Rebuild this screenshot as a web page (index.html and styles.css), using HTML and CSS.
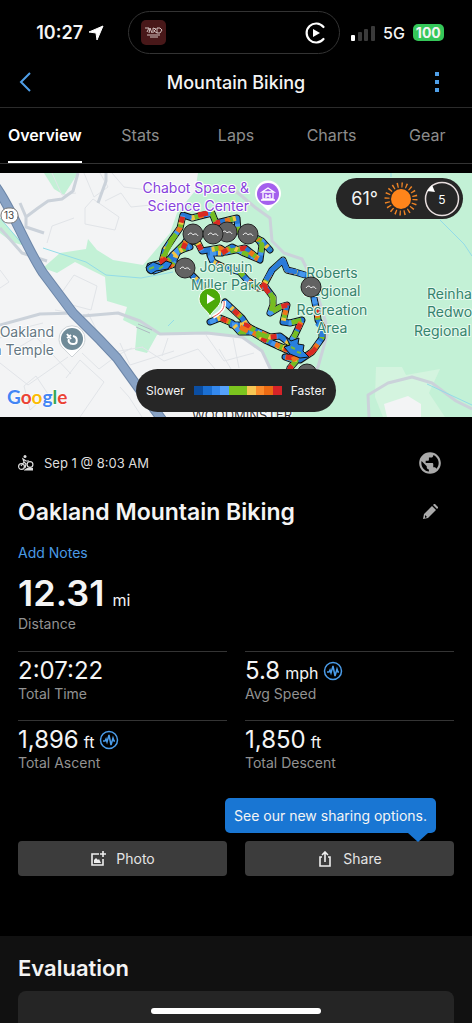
FILE: index.html
```html
<!DOCTYPE html>
<html lang="en">

<head>
    <meta charset="UTF-8">
    <meta name="viewport" content="width=device-width, initial-scale=1">
    <title>Mountain Biking</title>
    <link rel="stylesheet" href="styles.css">
</head>

<body>
    <div class="status">
        <div class="clock">
            <span>10:27</span>
            <svg width="16" height="16" viewBox="0 0 16 16"><path d="M15 1 9 15 8 8 1 7z" fill="#fff" stroke="#fff" stroke-linejoin="round"/></svg>
        </div>
        <div class="island">
            <svg width="25" height="25" viewBox="0 0 25 25">
                <rect width="25" height="25" rx="5" fill="#481819"/>
                <path d="M4 8l4 0-2 4M8 13l1-5 2 5M12 13V8l3 1-2 2 3 2M16 8h3l2 2-2 3h-3zM6 15h13M9 17h8" fill="none" stroke="#d3c2c0" stroke-width="1"/>
            </svg>
            <svg width="22" height="22" viewBox="0 0 22 22">
                <path d="M18.500 5A9.500 9.500 0 1 0 18.500 17" fill="none" stroke="#fff" stroke-width="2.200" stroke-linecap="round"/>
                <path d="M8 7v8l7-4z" fill="#fff"/>
            </svg>
        </div>
        <div class="signal">
            <svg width="24" height="16" viewBox="0 0 24 16">
                <rect x="0" y="10" width="4" height="6" rx="1" fill="#fff"/>
                <rect x="7" y="7" width="4" height="9" rx="1" fill="#3a3a3a"/>
                <rect x="13" y="4" width="4" height="12" rx="1" fill="#3a3a3a"/>
                <rect x="20" y="1" width="4" height="15" rx="1" fill="#3a3a3a"/>
            </svg>
            <span>5G</span>
            <span class="battery">100</span>
        </div>
    </div>

    <header class="header">
        <button class="icon-btn back" aria-label="Back">
            <svg width="12" height="20" viewBox="0 0 12 20"><path d="M11 1 2 10l9 9" fill="none" stroke="#4f9fe8" stroke-width="2"/></svg>
        </button>
        <h1>Mountain Biking</h1>
        <button class="icon-btn" aria-label="More">
            <svg width="6" height="20" viewBox="0 0 6 20"><path d="M1 0h4v4H1zM1 8h4v4H1zM1 16h4v4H1z" fill="#4f9fe8"/></svg>
        </button>
    </header>

    <nav class="tabs">
        <a class="active" href="#overview">Overview</a>
        <a href="#stats">Stats</a>
        <a href="#laps">Laps</a>
        <a href="#charts">Charts</a>
        <a href="#gear">Gear</a>
    </nav>

    <div class="map">
        <svg class="map-canvas" viewBox="0 0 472 244" preserveAspectRatio="xMidYMid slice">
            <defs>
                <g id="track">
                    <path d="M150 97 162 89 165 77 173 65 180 55 183 42 192 45 212 40 216 50 237 45 238 58 248 62 262 68 270 77"/>
                    <path d="M150 93 167 89 173 82 185 70 193 68 198 70 202 78 220 75 226 79 245 75 260 87 262 72 258 66"/>
                    <path d="M154 98 172 92 178 78 190 74"/>
                    <path d="M173 82 183 76 186 68"/>
                    <path d="M210 82 213 89 223 94 240 99 247 107 258 115 264 114"/>
                    <path d="M210 80 222 80 232 74 244 80 258 86"/>
                    <path d="M173 90 185 95 197 107 205 116"/>
                    <path d="M305 102 295 99 287 97 283 87 272 97 264 112 273 124 273 132 270 140 280 134 287 132 283 149 290 150 302 147 295 162 290 170"/>
                    <path d="M314 125 317 139 318 147 322 154 322 165 312 179 300 187 285 184 296 188 290 195 288 202"/>
                    <path d="M210 149 220 145 232 150 240 159 252 159 265 167 280 174 293 180"/>
                    <path d="M225 129 242 145 248 154 270 164 280 163 288 169 296 174 303 184"/>
                    <path d="M232 152 246 152 262 163 272 170 292 178"/>
                </g>
            </defs>
            <rect width="472" height="244" fill="#f3f4f5"/>
            <path class="park" d="M198 0 195 18 177 40 170 60 143 92 113 87 97 77 88 66 86 76 60 80 43 95 57 100 75 89 105 104 107 128 127 134 123 147 137 154 135 177 147 180 157 162 207 160 245 166 262 179 270 198 275 244H472V0z"/>
            <path class="park" d="M44 0h34L64 22 54 16zM0 45l25 28-13-4L0 60z"/>
            <path d="M376 194l26 0 4 8 34-6-11 24 16 24h-62l-8-20z" fill="#d4f4df"/>
            <path d="M384 231l24-8 13 8v13h-34zM160 163l48-3 37 6 20 18 7 30v30H142l5-62z" fill="#f3f4f5"/>

            <g class="street">
                <path d="M84 0l10 24 14-10-8-14M52 0l10 22 14-2M112 0l12 14 48 6M105 28l16-8 10 14 20-2M85 35l8-9 26 18-4 13-30-6zM47 70l5-17 22-8M60 122l14-20 23 11-6 24-19-5M0 115l9-6-9-12M55 137l30 5M88 140l20 40 35-6M120 170l10 22 44-14M112 185l20-10M16 176l20-12 35 37M0 190l28 22 40-28M24 213l12-10 12 18-18 16zM66 205l14-18 24 22-24 35M120 214l9 10 13 20M142 174l22 14 34-12 17 20M168 165l-6 18M206 162l18 26 30-8M219 176l12 20M233 165l6 30M82 180l17 16 16-12M0 165l15-8 28-7"/>
            </g>
            <path class="road" d="M78 0 73 18 62 26 48 28 38 35 26 44 20 30M26 44l0 10 18 6M0 55l22 25 25 8M83 143l35-3 22 8 20 13 47-1 35 4 20 14 14 30 6 36M0 152l40-11 35-1"/>
            <path class="road" d="M232 15l24 20 14 10 2 23 12 12 18 6 10 20 10 30 6 22-10 36-16 15M369 244l-1-22 20-12 24-6 20 6 24 18 16 8M106 0v8l-8 22"/>
            <path class="water" d="M43 75l43 14 20 13 35 3 32-6M0 45l24 28M391 0v4M440 47l24 24 8 12M168 153l6-6M427 211l45 21"/>
            <path class="highway-edge" d="M-4 14C12 36 26 74 43 100L73 140 100 167 117 185 140 217 163 248"/>
            <path class="highway" d="M-4 14C12 36 26 74 43 100L73 140 100 167 117 185 140 217 163 248"/>
            <path d="M136 154l14 6M138 151l14 6" stroke="#aebac2" fill="none"/>

            <g class="badge">
                <rect x="1" y="35" width="17" height="15" rx="7"/>
                <text x="9" y="46" text-anchor="middle">13</text>
            </g>

            <text class="label area" x="242" y="247" text-anchor="middle">WOODMINSTER</text>

            <use class="track track-edge" href="#track"/>
            <use class="track track-blue" href="#track"/>
            <use class="track track-sky" href="#track"/>
            <use class="track track-green" href="#track"/>
            <use class="track track-yellow" href="#track"/>
            <use class="track track-orange" href="#track"/>
            <use class="track track-red" href="#track"/>

            <!-- long stretches at one speed -->
            <g class="track">
                <path stroke="#2a7bda" d="M297 99 287 97 283 87 272 97 266 107M151 95 160 91M317 150 322 155 322 164"/>
                <path stroke="#76bd22" d="M270 120 273 125 273 132 271 138M164 83 172 67 176 61M256 160 268 164"/>
                <path stroke="#d92a22" d="M265 115 269 120M311 180 316 175M286 184 296 185M163 90 166 85M198 42 208 40"/>
                <path stroke="#ee751b" d="M240 154 248 158M292 187 298 184"/>
            </g>
            <path d="M146 94l7-5 8 3 5-4 6 2-4 6-12 2-5 3-4-3zM286 164l5 4 8-3-1 6 6 1-1 6 6 6-9 1-10-4-6-7 6-2z" fill="#2880df" stroke="#111"/>
            <path d="M149 96l5-2M159 96l4-3M291 174l4 2M297 179l4 1" stroke="#73b83b" stroke-width="2"/>
            <path d="M213 144c10-5 12-10 11-16" fill="none" stroke="#fff" stroke-width="4"/>
            <path d="M213 144c10-5 12-10 11-16" fill="none" stroke="#e85b52" stroke-width="1"/>

            <g class="label park-name" text-anchor="middle">
                <text x="226" y="99">Joaquin</text>
                <text x="226" y="117">Miller Park</text>
                <text x="332" y="105">Roberts</text>
                <text x="332" y="123">Regional</text>
                <text x="332" y="142">Recreation</text>
                <text x="332" y="160">Area</text>
            </g>
            <g class="label park-name">
                <text x="427" y="126">Reinhardt</text>
                <text x="427" y="144">Redwood</text>
                <text x="414" y="163">Regional Park</text>
            </g>
            <g class="label museum" text-anchor="end">
                <text x="249" y="20">Chabot Space &amp;</text>
                <text x="249" y="38">Science Center</text>
            </g>
            <g class="label place" text-anchor="end">
                <text x="54" y="164">Oakland</text>
                <text x="54" y="182">California Temple</text>
            </g>

            <g transform="translate(268 21)">
                <path d="M0 17-6 11A13 13 0 1 1 6 11z" fill="#fff"/>
                <circle r="11" fill="#a460ed"/>
                <path d="M-6-2 0-6 6-2zM-5-1V5H5V-1M-7 6H7M-2 4V0M2 4V0M-2 2H2" fill="none" stroke="#fff" stroke-width="1.300"/>
            </g>
            <g transform="translate(72 166)">
                <path d="M0 18-8 10A13 13 0 1 1 8 10z" fill="#fff" stroke="#cfd4d7"/>
                <circle r="11" fill="#708b98"/>
                <path d="M-5-5-1 0M-5-1l4-3M1-3c5 1 5 8 0 8-4 0-5-3-4-5" fill="none" stroke="#fff" stroke-width="2"/>
            </g>

            <g class="jump">
                <g transform="translate(227 59)"><circle r="10"/><path d="M-5 1c2-3 4-2 5 0 2-2 4-1 5 1"/></g>
                <g transform="translate(193 61)"><circle r="10"/><path d="M-5 1c2-3 4-2 5 0 2-2 4-1 5 1"/></g>
                <g transform="translate(213 61)"><circle r="10"/><path d="M-5 1c2-3 4-2 5 0 2-2 4-1 5 1"/></g>
                <g transform="translate(248 61)"><circle r="10"/><path d="M-5 1c2-3 4-2 5 0 2-2 4-1 5 1"/></g>
                <g transform="translate(185 95)"><circle r="10"/><path d="M-5 1c2-3 4-2 5 0 2-2 4-1 5 1"/></g>
                <g transform="translate(311 114)"><circle r="10"/><path d="M-5 1c2-3 4-2 5 0 2-2 4-1 5 1"/></g>
                <g transform="translate(307 201)"><circle r="10"/><path d="M-5 1c2-3 4-2 5 0 2-2 4-1 5 1"/></g>
            </g>

            <!-- start pin -->
            <path d="M210 144c-1-6-11-10-11-18a11 11 0 0 1 22 0c0 8-10 12-11 18z" fill="#4ba909" stroke="#fff" stroke-width="1"/>
            <path d="M207 121v10l8-5z" fill="#fff"/>

            <text class="google" x="7" y="231"><tspan fill="#4285f4">G</tspan><tspan fill="#ea4335">o</tspan><tspan fill="#fbbc05">o</tspan><tspan fill="#4285f4">g</tspan><tspan fill="#34a853">l</tspan><tspan fill="#ea4335">e</tspan></text>
        </svg>

        <div class="weather">
            <span class="temp">61°</span>
            <svg width="34" height="34" viewBox="-17 -17 34 34">
                <circle r="13.500" fill="none" stroke="#ef8425" stroke-width="6" stroke-dasharray="1.300 2.941"/>
                <circle r="11.500" fill="#262626"/>
                <circle r="10" fill="#ff851b"/>
            </svg>
            <svg class="wind" width="36" height="36" viewBox="-18 -18 36 36">
                <circle r="16.500" fill="none" stroke="#e8dede" stroke-width="1.500"/>
                <path d="M-15-8-10-14-7-7z" fill="#fff"/>
                <text y="5" text-anchor="middle">5</text>
            </svg>
        </div>

        <div class="legend">
            <span>Slower</span>
            <div class="scale"></div>
            <span>Faster</span>
        </div>
    </div>

    <main class="details" id="overview">
        <div class="row meta">
            <svg width="16" height="16" viewBox="0 0 16 16">
                <g fill="none" stroke="#ddd" stroke-width="1.200">
                    <circle cx="3.500" cy="11.500" r="2.900"/>
                    <circle cx="12" cy="9.500" r="2.900"/>
                    <path d="M3 11l3-4-1-3 3 2 3 0M6 7l2 2-1 4"/>
                </g>
                <circle cx="7" cy="1.500" r="1.500" fill="#ddd"/>
                <path d="M6 15l3-2h6v2.500H6z" fill="#ddd"/>
            </svg>
            <span class="date">Sep 1 @ 8:03 AM</span>
            <button class="icon-btn" aria-label="Privacy">
                <svg width="26" height="26" viewBox="0 0 24 24"><path fill="#aaa" d="M12 2C6.480 2 2 6.480 2 12s4.480 10 10 10 10-4.480 10-10S17.520 2 12 2zm-1 17.930c-3.950-.49-7-3.850-7-7.930 0-.62.08-1.210.21-1.790L9 15v1c0 1.100.9 2 2 2v1.930zm6.900-2.540c-.26-.81-1-1.390-1.900-1.390h-1v-3c0-.55-.45-1-1-1H8v-2h2c.55 0 1-.45 1-1V7h2c1.100 0 2-.9 2-2v-.41c2.930 1.190 5 4.060 5 7.410 0 2.080-.8 3.970-2.100 5.390z"/></svg>
            </button>
        </div>
        <div class="row title">
            <h2>Oakland Mountain Biking</h2>
            <button class="icon-btn" aria-label="Edit name">
                <svg width="16" height="16" viewBox="0 0 16 16"><path d="M1 15l1-5 8-8 4 4-8 8zM11 1l1-1h1l3 3v1l-1 1z" fill="#aaa"/><path d="M3 11l2 2-2 1z" fill="#000"/></svg>
            </button>
        </div>
        <a class="notes" href="#notes">Add Notes</a>

        <div class="distance">
            <div class="value">12.31 <small>mi</small></div>
            <div class="name">Distance</div>
        </div>

        <div class="stats">
            <div class="stat">
                <div class="value">2:07:22</div>
                <div class="name">Total Time</div>
            </div>
            <div class="stat">
                <div class="value">5.8 <small>mph</small>
                    <svg class="pulse" width="20" height="20" viewBox="0 0 20 20"><circle cx="10" cy="10" r="8.500"/><path d="M4 11h2l1-2 1 3 2-7 2 10 2-7 1 3h1"/></svg>
                </div>
                <div class="name">Avg Speed</div>
            </div>
            <div class="stat">
                <div class="value">1,896 <small>ft</small>
                    <svg class="pulse" width="20" height="20" viewBox="0 0 20 20"><circle cx="10" cy="10" r="8.500"/><path d="M4 11h2l1-2 1 3 2-7 2 10 2-7 1 3h1"/></svg>
                </div>
                <div class="name">Total Ascent</div>
            </div>
            <div class="stat">
                <div class="value">1,850 <small>ft</small></div>
                <div class="name">Total Descent</div>
            </div>
        </div>

        <div class="actions">
            <button class="btn">
                <svg width="16" height="16" viewBox="0 0 16 16"><path d="M9 3H2v11h11V8M13 0v6M10 3h6" fill="none" stroke="#eee" stroke-width="1.600"/><path d="M4 12V9l2-2 2 2 1-1 2 4z" fill="#eee"/></svg>
                Photo
            </button>
            <div class="share">
                <div class="tip">See our new sharing options.</div>
                <button class="btn">
                    <svg width="16" height="16" viewBox="0 0 16 16"><path d="M5 6H3v9h10V6h-2M8 11V2M5 4l3-3 3 3" fill="none" stroke="#eee" stroke-width="1.600"/></svg>
                    Share
                </button>
            </div>
        </div>
    </main>

    <section class="evaluation">
        <h2>Evaluation</h2>
        <div class="card"></div>
    </section>
    <div class="home"></div>
</body>

</html>
```
FILE: styles.css
```css
* {
    box-sizing: border-box;
}

body {
    margin: 0;
    min-height: 100vh;
    display: flex;
    flex-direction: column;
    overflow: hidden;
    background: #000;
    color: #f4f4f4;
    font-family: Inter, "Liberation Sans", sans-serif;
}

h1, h2 {
    margin: 0;
    font-weight: 600;
}

a {
    text-decoration: none;
}

svg {
    display: block;
    flex: none;
}

button {
    border: 0;
    font-family: inherit;
    color: inherit;
    cursor: pointer;
}

.icon-btn {
    width: 48px;
    padding: 0;
    display: flex;
    justify-content: center;
    background: none;
}

/* status bar */
.status {
    height: 57px;
    padding-top: 8px;
    display: grid;
    grid-template-columns: 1fr 212px 1fr;
    align-items: center;
    font-weight: 600;
}

.clock {
    display: flex;
    align-items: center;
    justify-content: flex-end;
    gap: 5px;
    padding-right: 26px;
    font-size: 18px;
}

.island {
    height: 43px;
    margin: 0 2px 0 -2px;
    padding: 0 12px;
    display: flex;
    align-items: center;
    justify-content: space-between;
    border: 1px solid #333;
    border-radius: 22px;
}

.signal {
    display: flex;
    align-items: center;
    gap: 8px;
    padding-left: 9px;
    font-size: 16px;
    font-weight: 500;
}

.battery {
    padding: 0 3px;
    border-radius: 5px;
    background: #35c759;
    font-size: 14px;
    font-weight: 700;
    line-height: 17px;
}

/* header */
.header {
    height: 51px;
    padding: 0 11px 0 1px;
    display: flex;
    align-items: center;
    justify-content: space-between;
    border-bottom: 1px solid #2b2b2b;
}

.header h1 {
    font-size: 18px;
    font-weight: 500;
}

.back {
    width: 58px;
    padding-right: 10px;
}

.tabs {
    height: 56px;
    margin: 0 -3px 9px;
    display: grid;
    grid-template-columns: repeat(5, 1fr);
    justify-items: center;
    border-bottom: 1px solid #333;
}

.tabs a {
    color: #8d8d8d;
    font-size: 16px;
    line-height: 55px;
}

.tabs .active {
    height: 55px;
    border-bottom: 2px solid #fff;
    color: #fff;
    font-weight: 600;
}

/* map */
.map {
    position: relative;
    height: 244px;
    overflow: hidden;
}

.map-canvas {
    width: 100%;
    height: 100%;
}

.park {
    fill: #c3f1d6;
}

.street {
    fill: none;
    stroke: #e1e4e8;
    stroke-width: 1;
}

.road {
    fill: none;
    stroke: #cbd2da;
    stroke-width: 3;
    stroke-linejoin: round;
}

.water {
    fill: none;
    stroke: #93dce8;
    stroke-width: 1;
}

.highway-edge {
    fill: none;
    stroke: #6c86a8;
    stroke-width: 10;
}

.highway {
    fill: none;
    stroke: #89a3c5;
    stroke-width: 8;
}

.badge rect {
    fill: #fff;
    stroke: #777;
}

.badge text {
    font-size: 10px;
    fill: #444;
}

.track {
    fill: none;
    stroke-width: 5;
    stroke-linejoin: round;
}

.track-edge {
    stroke: #111;
    stroke-width: 7;
    stroke-linecap: round;
}

.track-blue {
    stroke: #2678d4;
    stroke-linecap: round;
}

.track-sky {
    stroke: #4697ee;
    stroke-dasharray: 6 9;
}

.track-green {
    stroke: #76bd22;
    stroke-dasharray: 10 13 7 12;
    stroke-dashoffset: 30;
}

.track-yellow {
    stroke: #f1c444;
    stroke-dasharray: 3 27 3 16;
    stroke-dashoffset: 22;
}

.track-orange {
    stroke: #ee751b;
    stroke-dasharray: 5 29;
    stroke-dashoffset: 19;
}

.track-red {
    stroke: #d92a22;
    stroke-dasharray: 6 41;
    stroke-dashoffset: 35;
}

.label {
    font-size: 14px;
    font-weight: 400;
    paint-order: stroke;
    stroke: #fff;
    stroke-width: 2;
    stroke-linejoin: round;
}

.park-name {
    fill: #35836d;
    stroke: #e6f9ee;
}

.museum {
    fill: #8743dc;
}

.place {
    fill: #647782;
}

.area {
    fill: #333;
    font-size: 13px;
}

.google {
    font-family: Lato, sans-serif;
    font-size: 19px;
    font-weight: 700;
    paint-order: stroke;
    stroke: #fff;
    stroke-width: 1;
}

.jump circle {
    fill: #626262;
    stroke: #222;
}

.jump path {
    fill: none;
    stroke: #fff;
}

.weather {
    position: absolute;
    top: 5px;
    right: 9px;
    height: 41px;
    padding: 0 3px 0 15px;
    display: flex;
    align-items: center;
    gap: 6px;
    border-radius: 21px;
    background: #262626;
}

.temp {
    font-size: 18px;
}

.wind text {
    fill: #fff;
    font-size: 12px;
}

.legend {
    position: absolute;
    left: 50%;
    bottom: 5px;
    width: 200px;
    height: 43px;
    transform: translateX(-50%);
    display: flex;
    align-items: center;
    justify-content: center;
    gap: 9px;
    border-radius: 22px;
    background: #262626;
    font-size: 12px;
}

.scale {
    width: 88px;
    height: 9px;
    background: linear-gradient(90deg, #0b4ea2 10%, #1b6fd2 10% 20%, #3489ee 20% 30%, #55a1fa 30% 40%, #7bc41f 40% 60%, #f6c653 60% 70%, #fb8c2b 70% 80%, #ec6b13 80% 90%, #d62328 90%);
}

/* details */
.details {
    padding: 30px 18px 60px;
}

.row {
    display: flex;
    align-items: center;
}

.row .icon-btn {
    margin-left: auto;
}

.meta {
    height: 32px;
}

.date {
    margin-left: 10px;
    font-size: 13px;
    color: #ddd;
}

.title {
    height: 65px;
}

.title h2 {
    font-size: 23px;
}

.notes {
    display: block;
    color: #4a9ae5;
    font-size: 14px;
    line-height: 18px;
}

.value {
    display: flex;
    align-items: baseline;
    gap: 5px;
    font-size: 24px;
    line-height: 28px;
}

.value small {
    font-size: 16px;
    font-weight: 400;
    line-height: 16px;
}

.name {
    color: #929292;
    font-size: 14px;
    line-height: 18px;
}

.distance {
    margin: 10px 0 18px;
}

.distance .value {
    gap: 8px;
    font-size: 36px;
    font-weight: 600;
    line-height: 43px;
}

.stats {
    display: grid;
    grid-template-columns: 1fr 1fr;
    column-gap: 18px;
}

.stat {
    height: 69px;
    padding-top: 5px;
    border-top: 1px solid #343434;
}

.pulse {
    align-self: center;
    fill: none;
    stroke: #4b9ce9;
    stroke-width: 1.5px;
}

.actions {
    margin-top: 52px;
    display: grid;
    grid-template-columns: 1fr 1fr;
    gap: 18px;
}

.btn {
    width: 100%;
    height: 35px;
    display: flex;
    align-items: center;
    justify-content: center;
    gap: 10px;
    border-radius: 4px;
    background: #3c3c3c;
    color: #e4e4e4;
    font-size: 14px;
}

.share {
    position: relative;
}

.tip {
    position: absolute;
    right: 18px;
    bottom: 43px;
    padding: 0 9px;
    border-radius: 5px;
    background: #1976d3;
    font-size: 14px;
    line-height: 35px;
    white-space: nowrap;
}

.tip:after {
    content: "";
    position: absolute;
    right: 8px;
    top: 100%;
    border: 10px solid transparent;
    border-top: 9px solid #1976d3;
    border-bottom: 0;
}

/* evaluation */
.evaluation {
    flex: 1;
    display: flex;
    flex-direction: column;
    padding: 17px 18px 0;
    background: #111;
}

.evaluation h2 {
    font-size: 22px;
    line-height: 30px;
}

.card {
    flex: 1;
    min-height: 32px;
    margin-top: 8px;
    border-radius: 8px 8px 0 0;
    background: #252525;
}

.home {
    position: fixed;
    left: 50%;
    bottom: 9px;
    width: 170px;
    height: 6px;
    transform: translateX(-50%);
    border-radius: 3px;
    background: #fff;
}
```
